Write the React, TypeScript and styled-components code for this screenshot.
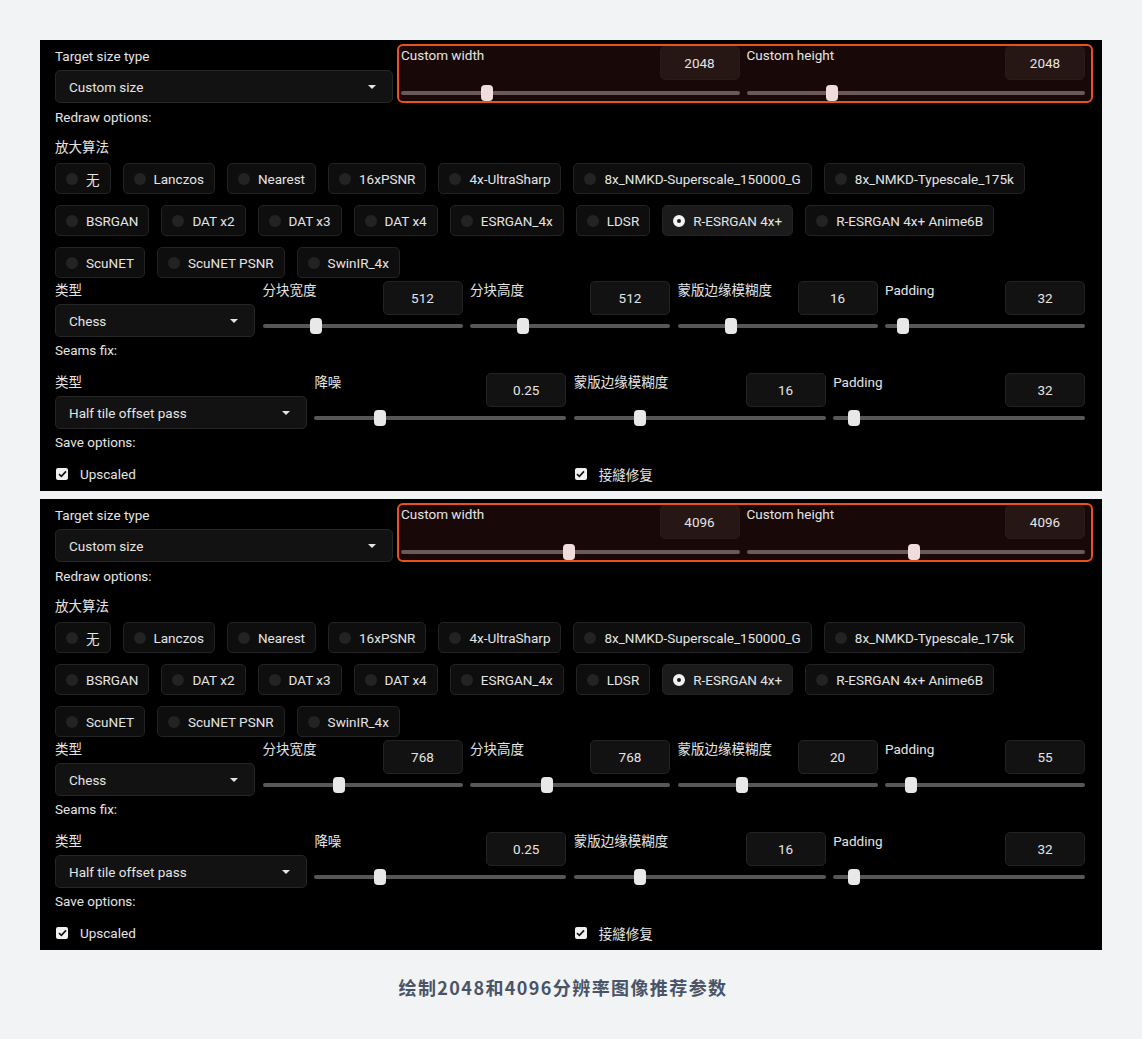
import styled, { createGlobalStyle } from "styled-components";

const GlobalStyle = createGlobalStyle`
  body {
    margin: 0;
    background: #f2f3f5;
  }
`;

const Page = styled.div`
  padding: 40px 0 0 40px;
  width: 1142px;
  box-sizing: border-box;
  display: flex;
  flex-direction: column;
  gap: 8px;
`;

const Panel = styled.section`
  width: 1062px;
  height: 451px;
  box-sizing: border-box;
  padding: 4px 17px 0 15px;
  background: #000;
  color: #e4e4e4;
  font-family: Roboto, "Noto Sans CJK SC", sans-serif;
  font-size: 13.5px;
`;

const TopRow = styled.div`
  display: grid;
  grid-template-columns: 338px 1fr;
  gap: 4px;
`;

const Column = styled.div<{ $offset?: number }>`
  display: flex;
  flex-direction: column;
  padding-top: ${({ $offset }) => $offset ?? 0}px;
`;

const Label = styled.div`
  line-height: 18px;
  white-space: nowrap;
`;

const SectionTitle = styled.div<{ $gap: number }>`
  line-height: 18px;
  margin-top: ${({ $gap }) => $gap}px;
`;

const Select = styled.div`
  margin-top: 5px;
  height: 33px;
  box-sizing: border-box;
  border: 1px solid #262626;
  border-radius: 5px;
  background: #121212;
  display: flex;
  align-items: center;
  justify-content: space-between;
  padding: 0 16px 0 13px;
`;

const Caret = styled.span`
  width: 0;
  height: 0;
  border-left: 4px solid transparent;
  border-right: 4px solid transparent;
  border-top: 4px solid #e4e4e4;
`;

const Highlight = styled.div`
  margin-right: -8px;
  border: 2px solid #e9521d;
  border-radius: 6px;
  background: #180908;
  padding: 0 6px 0 2px;
  display: grid;
  grid-template-columns: 1fr 1fr;
  gap: 7px;
`;

const FieldHead = styled.div`
  display: flex;
  justify-content: space-between;
  align-items: flex-start;
`;

const NumberBox = styled.div<{ $warm?: boolean }>`
  width: 80px;
  height: 34px;
  box-sizing: border-box;
  border: 1px solid ${({ $warm }) => ($warm ? "#2c1a18" : "#232323")};
  border-radius: 5px;
  background: ${({ $warm }) => ($warm ? "#261614" : "#121212")};
  display: flex;
  align-items: center;
  justify-content: center;
`;

const Track = styled.div<{ $warm?: boolean }>`
  position: relative;
  height: ${({ $warm }) => ($warm ? 21 : 22)}px;

  &::before {
    content: "";
    position: absolute;
    left: 0;
    right: 0;
    top: ${({ $warm }) => ($warm ? 11 : 9)}px;
    height: 4px;
    border-radius: 2px;
    background: ${({ $warm }) => ($warm ? "#6b5957" : "#575757")};
  }
`;

const Thumb = styled.div<{ $warm?: boolean }>`
  position: absolute;
  top: ${({ $warm }) => ($warm ? 5 : 3)}px;
  width: 12px;
  height: 16px;
  border-radius: 4px;
  background: ${({ $warm }) => ($warm ? "#efdcdb" : "#e8e8e8")};
`;

const RadioWrap = styled.div`
  margin-top: 7px;
  display: flex;
  flex-wrap: wrap;
  gap: 11px 12px;
`;

const Pill = styled.div<{ $active: boolean }>`
  height: 31px;
  box-sizing: border-box;
  display: flex;
  align-items: center;
  gap: 8px;
  padding: 0 10px;
  border: 1px solid #232323;
  border-radius: 5px;
  background: ${({ $active }) => ($active ? "#1b1b1b" : "#0e0e0e")};
  white-space: nowrap;
`;

const Dot = styled.span<{ $active: boolean }>`
  width: 12px;
  height: 12px;
  border-radius: 50%;
  box-sizing: border-box;
  background: ${({ $active }) => ($active ? "#1b1b1b" : "#232323")};
  border: ${({ $active }) => ($active ? "4px solid #f2f2f2" : "none")};
`;

const Grid = styled.div<{ $cols: number; $gap: number }>`
  margin-top: ${({ $gap }) => $gap}px;
  display: grid;
  grid-template-columns: repeat(${({ $cols }) => $cols}, 1fr);
  gap: 7.5px;
`;

const CheckRow = styled.div`
  display: flex;
  align-items: center;
  gap: 12px;
  height: 18px;
  padding-left: 1px;
`;

const Box = styled.span`
  width: 12px;
  height: 12px;
  border-radius: 2px;
  background: #f0f0f0;
  display: flex;
  align-items: center;
  justify-content: center;
`;

const Caption = styled.div`
  margin: 15px 0 0 -40px;
  width: 1142px;
  box-sizing: border-box;
  padding-right: 16px;
  text-align: center;
  font-family: "Noto Sans CJK SC", "Noto Sans", sans-serif;
  font-weight: 700;
  font-size: 18px;
  letter-spacing: 1.4px;
  line-height: 28px;
  color: #4a5466;
`;

type SliderProps = {
  label: string;
  value: number;
  min: number;
  max: number;
  warm?: boolean;
};

function SliderField({ label, value, min, max, warm }: SliderProps) {
  const pct = (value - min) / (max - min);
  return (
    <Column>
      <FieldHead>
        <Label>{label}</Label>
        <NumberBox $warm={warm}>{value}</NumberBox>
      </FieldHead>
      <Track $warm={warm}>
        <Thumb
          $warm={warm}
          style={{ left: `calc(${pct * 100}% - ${pct * 12}px)` }}
        />
      </Track>
    </Column>
  );
}

function SelectField({ label, value }: { label: string; value: string }) {
  return (
    <Column>
      <Label>{label}</Label>
      <Select>
        {value}
        <Caret />
      </Select>
    </Column>
  );
}

function Checkbox({ label }: { label: string }) {
  return (
    <CheckRow>
      <Box>
        <svg width="9" height="8" viewBox="0 0 9 8">
          <path
            d="M1 4.2 L3.4 6.4 L8 1.4"
            fill="none"
            stroke="#111"
            strokeWidth="1.6"
          />
        </svg>
      </Box>
      {label}
    </CheckRow>
  );
}

const upscalers = [
  "无",
  "Lanczos",
  "Nearest",
  "16xPSNR",
  "4x-UltraSharp",
  "8x_NMKD-Superscale_150000_G",
  "8x_NMKD-Typescale_175k",
  "BSRGAN",
  "DAT x2",
  "DAT x3",
  "DAT x4",
  "ESRGAN_4x",
  "LDSR",
  "R-ESRGAN 4x+",
  "R-ESRGAN 4x+ Anime6B",
  "ScuNET",
  "ScuNET PSNR",
  "SwinIR_4x",
];

type Preset = {
  size: number;
  tileW: number;
  tileH: number;
  blur: number;
  padding: number;
};

function UpscalePanel({ size, tileW, tileH, blur, padding }: Preset) {
  return (
    <Panel>
      <TopRow>
        <Column $offset={3}>
          <Label>Target size type</Label>
          <Select>
            Custom size
            <Caret />
          </Select>
        </Column>
        <Highlight>
          <SliderField label="Custom width" value={size} min={64} max={8192} warm />
          <SliderField label="Custom height" value={size} min={64} max={8192} warm />
        </Highlight>
      </TopRow>

      <SectionTitle $gap={5}>Redraw options:</SectionTitle>
      <SectionTitle $gap={12}>放大算法</SectionTitle>
      <RadioWrap>
        {upscalers.map((name) => {
          const active = name === "R-ESRGAN 4x+";
          return (
            <Pill key={name} $active={active}>
              <Dot $active={active} />
              {name}
            </Pill>
          );
        })}
      </RadioWrap>

      <Grid $cols={5} $gap={3}>
        <SelectField label="类型" value="Chess" />
        <SliderField label="分块宽度" value={tileW} min={0} max={2048} />
        <SliderField label="分块高度" value={tileH} min={0} max={2048} />
        <SliderField label="蒙版边缘模糊度" value={blur} min={0} max={64} />
        <SliderField label="Padding" value={padding} min={0} max={512} />
      </Grid>

      <SectionTitle $gap={4}>Seams fix:</SectionTitle>
      <Grid $cols={4} $gap={14}>
        <SelectField label="类型" value="Half tile offset pass" />
        <SliderField label="降噪" value={0.25} min={0} max={1} />
        <SliderField label="蒙版边缘模糊度" value={16} min={0} max={64} />
        <SliderField label="Padding" value={32} min={0} max={512} />
      </Grid>

      <SectionTitle $gap={4}>Save options:</SectionTitle>
      <Grid $cols={2} $gap={14}>
        <Checkbox label="Upscaled" />
        <Checkbox label="接縫修复" />
      </Grid>
    </Panel>
  );
}

export default function App() {
  return (
    <>
      <GlobalStyle />
      <Page>
        <UpscalePanel size={2048} tileW={512} tileH={512} blur={16} padding={32} />
        <UpscalePanel size={4096} tileW={768} tileH={768} blur={20} padding={55} />
        <Caption>绘制2048和4096分辨率图像推荐参数</Caption>
      </Page>
    </>
  );
}
